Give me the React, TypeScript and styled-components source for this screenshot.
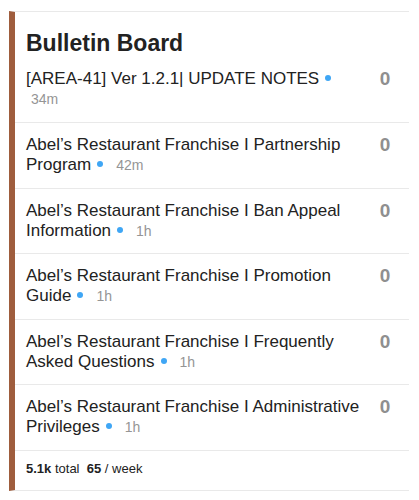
import React from "react";
import styled, { createGlobalStyle } from "styled-components";

const GlobalStyle = createGlobalStyle`
  body {
    margin: 0;
    background: #fff;
    font-family: "Liberation Sans", Arial, sans-serif;
    color: #222;
  }
`;

const Page = styled.div`
  padding: 11px 10px 10px 9px;
`;

const Card = styled.div`
  border-left: 6px solid #9f5d3d;
  border-top: 1px solid #e9e9e9;
  border-bottom: 1px solid #e9e9e9;
`;

const Title = styled.h2`
  margin: 0;
  padding: 18px 0 0 11px;
  font-size: 23px;
  line-height: 26px;
  font-weight: 700;
  color: #222;
`;

const Row = styled.div<{ $first?: boolean }>`
  display: flex;
  align-items: flex-start;
  padding: ${(p) => (p.$first ? "13px 0 13px 11px" : "12px 0 12.6px 11px")};
  border-bottom: 1px solid #e9e9e9;
`;

const Topic = styled.div`
  flex: 1;
  font-size: 17px;
  line-height: 20px;
  color: #222;
`;

const Dot = styled.span`
  display: inline-block;
  width: 6px;
  height: 6px;
  border-radius: 50%;
  background: #3fa6f5;
  margin: 0 8px 0 6px;
  vertical-align: 3px;
`;

const Age = styled.span`
  font-size: 14px;
  color: #959595;
  margin-left: 5px;
`;

const Count = styled.div`
  width: 40px;
  margin-right: 4px;
  text-align: center;
  font-size: 19px;
  font-weight: 700;
  line-height: 20px;
  color: #8f8f8f;
`;

const Footer = styled.div`
  padding: 10.5px 0 12.5px 11px;
  font-size: 13px;
  line-height: 16px;
  color: #222;
  b {
    font-weight: 700;
  }
`;

const topics = [
  { title: "[AREA-41] Ver 1.2.1| UPDATE NOTES", age: "34m", count: 0 },
  { title: "Abel’s Restaurant Franchise I Partnership Program", age: "42m", count: 0 },
  { title: "Abel’s Restaurant Franchise I Ban Appeal Information", age: "1h", count: 0 },
  { title: "Abel’s Restaurant Franchise I Promotion Guide", age: "1h", count: 0 },
  { title: "Abel’s Restaurant Franchise I Frequently Asked Questions", age: "1h", count: 0 },
  { title: "Abel’s Restaurant Franchise I Administrative Privileges", age: "1h", count: 0 },
];

export default function App() {
  return (
    <>
      <GlobalStyle />
      <Page>
        <Card>
          <Title>Bulletin Board</Title>
          {topics.map((t, i) => (
            <Row key={i} $first={i === 0}>
              <Topic>
                {t.title}
                <Dot />
                {i === 0 && <br />}
                <Age>{t.age}</Age>
              </Topic>
              <Count>{t.count}</Count>
            </Row>
          ))}
          <Footer>
            <b>5.1k</b> total&nbsp; <b>65</b> / week
          </Footer>
        </Card>
      </Page>
    </>
  );
}
